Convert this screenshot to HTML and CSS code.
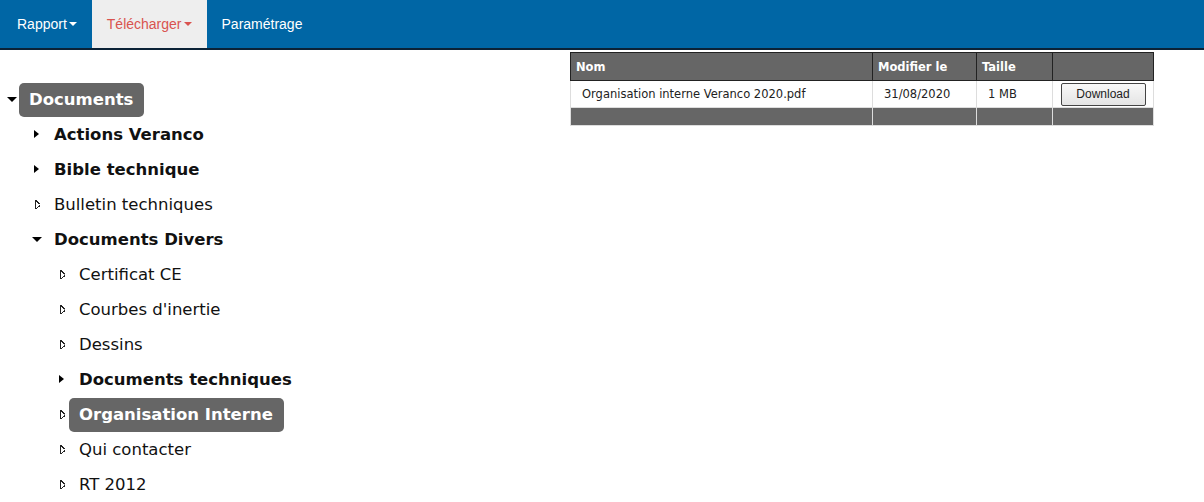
FILE: index.html
```html
<!DOCTYPE html>
<html lang="fr">
<head>
  <meta charset="UTF-8" />
  <title>Documents</title>
  <link rel="stylesheet" href="styles.css">
</head>
<body>
  <nav class="navbar">
    <a href="#" class="nav-item">Rapport<span class="caret"></span></a>
    <a href="#" class="nav-item active">Télécharger<span class="caret"></span></a>
    <a href="#" class="nav-item">Paramétrage</a>
  </nav>

  <div class="contenu">
    <ul class="arbre">
      <li>
        <div class="ligne"><span class="fleche bas"></span><span class="libelle selection gras">Documents</span></div>
        <ul>
          <li><div class="ligne"><span class="fleche plein"></span><span class="libelle gras">Actions Veranco</span></div></li>
          <li><div class="ligne"><span class="fleche plein"></span><span class="libelle gras">Bible technique</span></div></li>
          <li><div class="ligne"><span class="fleche vide"></span><span class="libelle">Bulletin techniques</span></div></li>
          <li>
            <div class="ligne"><span class="fleche bas"></span><span class="libelle gras">Documents Divers</span></div>
            <ul>
              <li><div class="ligne"><span class="fleche vide"></span><span class="libelle">Certificat CE</span></div></li>
              <li><div class="ligne"><span class="fleche vide"></span><span class="libelle">Courbes d'inertie</span></div></li>
              <li><div class="ligne"><span class="fleche vide"></span><span class="libelle">Dessins</span></div></li>
              <li><div class="ligne"><span class="fleche plein"></span><span class="libelle gras">Documents techniques</span></div></li>
              <li><div class="ligne"><span class="fleche vide"></span><span class="libelle selection gras">Organisation Interne</span></div></li>
              <li><div class="ligne"><span class="fleche vide"></span><span class="libelle">Qui contacter</span></div></li>
              <li><div class="ligne"><span class="fleche vide"></span><span class="libelle">RT 2012</span></div></li>
            </ul>
          </li>
        </ul>
      </li>
    </ul>

    <table class="fichiers">
      <thead>
        <tr>
          <th class="col-nom">Nom</th>
          <th class="col-date">Modifier le</th>
          <th class="col-taille">Taille</th>
          <th class="col-action"></th>
        </tr>
      </thead>
      <tbody>
        <tr>
          <td>Organisation interne Veranco 2020.pdf</td>
          <td>31/08/2020</td>
          <td>1 MB</td>
          <td class="centre"><button class="btn-download">Download</button></td>
        </tr>
      </tbody>
      <tfoot>
        <tr><td></td><td></td><td></td><td></td></tr>
      </tfoot>
    </table>
  </div>
</body>
</html>
```

FILE: styles.css
```css
body {
  margin: 0;
  padding: 0;
  background: #fff;
  color: #000;
  font-family: "DejaVu Sans", Verdana, sans-serif;
}

.navbar {
  display: flex;
  height: 48px;
  padding-left: 2px;
  background: #0066a5;
  border-bottom: 2px solid #0b2236;
}

.nav-item {
  display: flex;
  align-items: center;
  padding: 0 15px;
  color: #fff;
  text-decoration: none;
  font-family: "Liberation Sans", Arial, sans-serif;
  font-size: 14px;
}

.nav-item:first-child {
  margin-left: -2px;
  padding-left: 17px;
}

.nav-item.active {
  background: #eeeeee;
  color: #d9534f;
}

.caret {
  display: inline-block;
  width: 0;
  height: 0;
  margin-left: 2px;
  border-top: 4px solid;
  border-left: 4px solid transparent;
  border-right: 4px solid transparent;
}

.contenu {
  display: flex;
  align-items: flex-start;
}

/* Arbre des dossiers */
.arbre,
.arbre ul {
  list-style: none;
  margin: 0;
  padding: 0;
}

.arbre {
  box-sizing: border-box;
  width: 570px;
  padding: 32px 0 0 5px;
}

.arbre ul {
  padding-left: 25px;
}

.ligne {
  display: flex;
  align-items: center;
  height: 35px;
}

.fleche {
  flex: 0 0 14px;
  height: 35px;
  position: relative;
}

.fleche::before {
  content: "";
  position: absolute;
  width: 0;
  height: 0;
  border-style: solid;
}

.fleche.plein::before {
  top: 13px;
  left: 4px;
  border-width: 4px 0 4px 5px;
  border-color: transparent transparent transparent #000;
}

.fleche.vide::before {
  top: 13px;
  left: 5px;
  width: 5px;
  height: 9px;
  border: 0;
  background: linear-gradient(to top right, transparent 45%, #222 45%, #222 62%, transparent 62%) top / 100% 50% no-repeat,
              linear-gradient(to bottom right, transparent 45%, #222 45%, #222 62%, transparent 62%) bottom / 100% 50% no-repeat,
              linear-gradient(#222, #222) left / 1px 100% no-repeat;
}

.fleche.bas::before {
  top: 15px;
  left: 2px;
  border-width: 5px 5px 0 5px;
  border-color: #000 transparent transparent transparent;
}

.libelle {
  padding: 0 11px 0 10px;
  font-size: 16.5px;
  line-height: 34px;
  color: #111;
  white-space: nowrap;
}

.libelle.gras {
  font-weight: bold;
}

.libelle.selection {
  background: #666;
  color: #fff;
  border-radius: 5px;
}

/* Tableau des fichiers */
.fichiers {
  margin-top: 2px;
  border-collapse: collapse;
  font-size: 11.5px;
  width: 584px;
}

.fichiers th {
  background: #666;
  color: #fff;
  text-align: left;
  height: 27px;
  padding: 0 5px;
  border: 1px solid #222;
  font-weight: bold;
}

.col-nom { width: 291px; }
.col-date { width: 93px; }
.col-taille { width: 65px; }

.fichiers tbody td {
  height: 26px;
  padding: 0 10px 0 11px;
  color: #222;
  border: 1px solid #ddd;
  border-top: 0;
}

.fichiers td.centre {
  text-align: center;
  padding: 0;
}

.fichiers tfoot td {
  background: #666;
  height: 17px;
  padding: 0;
  border: 1px solid #ddd;
}

.btn-download {
  font-family: "Liberation Sans", Arial, sans-serif;
  font-size: 12px;
  color: #222;
  width: 85px;
  height: 23px;
  padding: 0;
  background: linear-gradient(#f8f8f8, #e4e4e4);
  border: 1px solid #444;
  border-radius: 2px;
}
```
